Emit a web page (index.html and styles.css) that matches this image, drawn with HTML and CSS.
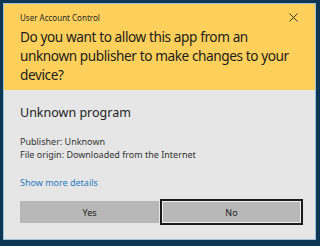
FILE: index.html
```html
<!DOCTYPE html>
<html lang="en">
<head>
    <meta charset="UTF-8">
    <title>User Account Control</title>
    <link rel="stylesheet" href="styles.css">
</head>
<body>

    <!-- UAC dialog -->
    <div class="dialog">
        <div class="header">
            <div class="title-row">
                <span class="caption">User Account Control</span>
                <svg class="close" width="9" height="9" viewBox="0 0 9 9">
                    <path d="M0.5 0.5 L8.5 8.5 M8.5 0.5 L0.5 8.5" stroke="#3a3320" stroke-width="1"/>
                </svg>
            </div>
            <div class="question">Do you want to allow this app from an unknown publisher to make changes to your device?</div>
        </div>

        <div class="body">
            <div class="program">Unknown program</div>
            <div class="info">
                <div>Publisher: Unknown</div>
                <div>File origin: Downloaded from the Internet</div>
            </div>
            <a class="details" href="#">Show more details</a>
            <div class="buttons">
                <button class="btn">Yes</button>
                <button class="btn btn-focus">No</button>
            </div>
        </div>
    </div>

</body>
</html>
```

FILE: styles.css
```css
/* Page */
body {
    margin: 0;
    background: #0d3554;
    font-family: "Segoe UI", "Noto Sans", "Open Sans", sans-serif;
    height: 246px;
    padding: 3px 4px 0 3px;
    box-sizing: border-box;
}

/* Dialog */
.dialog {
    border: 1px solid #9cc0dc;
    background: #e6e6e6;
    height: 237px;
    box-sizing: border-box;
    display: flex;
    flex-direction: column;
}

.header {
    background: #fdd05b;
    padding: 6px 10px 5px 16px;
    height: 86px;
    box-sizing: border-box;
}

.title-row {
    display: flex;
    justify-content: space-between;
    align-items: center;
    height: 14px;
    margin-right: 6px;
}

.caption {
    font-size: 8px;
    color: #2a2a2a;
}

.close {
    margin-right: 1px;
}

.question {
    font-size: 13.6px;
    letter-spacing: -0.4px;
    line-height: 19px;
    color: #1c1c1c;
    margin-top: 3px;
}

.body {
    padding: 14px 12px 0 16px;
}

.program {
    font-size: 12.5px;
    color: #222;
    line-height: 18px;
}

.info {
    margin-top: 13px;
    font-size: 9px;
    line-height: 13px;
    color: #333;
}

.details {
    display: block;
    margin-top: 15px;
    font-size: 9px;
    line-height: 13px;
    color: #2a7ac0;
    text-decoration: none;
}

.buttons {
    display: flex;
    gap: 1px;
    margin-top: 12px;
}

.btn {
    flex: 1;
    height: 22px;
    border: none;
    background: #b8b8b8;
    font-family: inherit;
    font-size: 9px;
    color: #222;
    padding: 0;
}

.btn-focus {
    border: 2px solid #1a1a1a;
    height: 26px;
    margin-top: -2px;
    box-shadow: inset 0 0 0 1px #f0f0f0;
}
```
